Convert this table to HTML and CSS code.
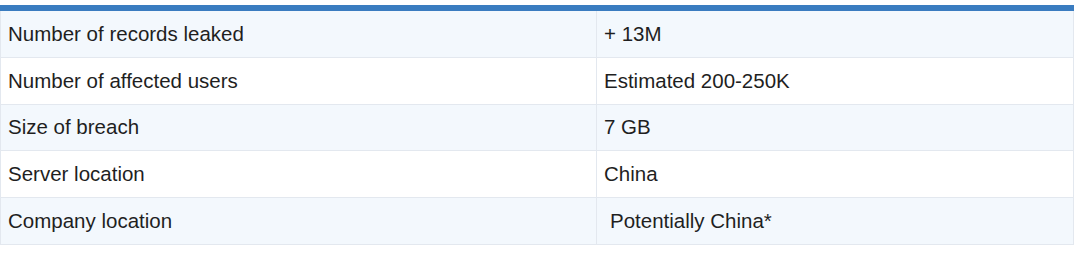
FILE: index.html
```html
<!DOCTYPE html>
<html>
<head>
<meta charset="utf-8">
<link rel="stylesheet" href="styles.css">
</head>
<body>
<div class="wrap">
<table class="facts">
  <colgroup><col class="c1"><col class="c2"></colgroup>
  <tbody>
    <tr><td>Number of records leaked</td><td>+ 13M</td></tr>
    <tr><td>Number of affected users</td><td>Estimated 200-250K</td></tr>
    <tr><td>Size of breach</td><td>7 GB</td></tr>
    <tr><td>Server location</td><td>China</td></tr>
    <tr><td>Company location</td><td class="indent">Potentially China*</td></tr>
  </tbody>
</table>
</div>
</body>
</html>
```
FILE: styles.css
```css
html, body {
  margin: 0;
  padding: 0;
  background: #ffffff;
}
body {
  padding-top: 5px;
  font-family: "Liberation Sans", Arial, sans-serif;
  color: #1f1f1f;
}
.wrap {
  width: 1074px;
  border-top: 6px solid #3a7cc0;
}
.facts {
  width: 1074px;
  border-collapse: collapse;
  table-layout: fixed;
  font-size: 20.5px;
}
.c1 { width: 596px; }
.facts td {
  border: 1px solid #e3e8ef;
  padding: 0 7px;
  height: 45.8px;
  line-height: 22px;
  vertical-align: middle;
  white-space: nowrap;
}
.facts tr:first-child td { border-top: none; }
.facts tr:nth-child(odd) td { background: #f3f8fd; }
.facts td.indent { padding-left: 13px; }
```
